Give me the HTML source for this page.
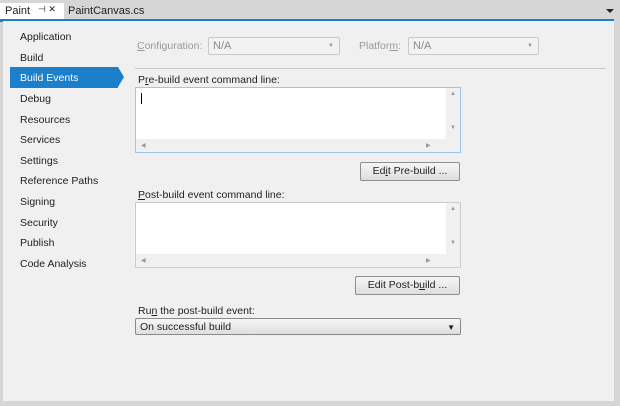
<!DOCTYPE html>
<html><head><style>
*{margin:0;padding:0;box-sizing:border-box}
body{width:620px;height:406px;background:#d6d6d6;font-family:"Liberation Sans",sans-serif;font-size:11px;color:#1e1e1e;position:relative;overflow:hidden}
.a{position:absolute}
.main{left:3px;top:21px;width:611px;height:380px;background:#f0f0f0}
.nav{left:20px;font-size:10.5px;color:#1e1e1e}
.lbl{font-size:10.5px;white-space:nowrap}
.combo{background:#f2f2f2;border:1px solid #c8c8c8;border-radius:2px;color:#8a8a8a;font-size:11px;padding:2px 4px}
.tb{background:#fff;border:1px solid #9ec6e8}
.btn{border:1px solid #8e8e8e;border-radius:2px;background:linear-gradient(#f6f6f6,#dedede);text-align:center;font-size:10.5px;line-height:17px}
.sv{background:#f0f0f0}
.ar{font-size:6px;color:#999}
</style></head><body>
<div class="a" style="left:0;top:3px;width:64px;height:17px;background:#fff"></div>
<div class="a lbl" style="left:5px;top:5px;font-size:11px">Paint</div>
<div class="a" style="left:38px;top:4px;font-size:9px">⊣ ✕</div>
<div class="a lbl" style="left:68px;top:5px;font-size:11px">PaintCanvas.cs</div>
<div class="a" style="left:606px;top:9px;width:0;height:0;border:4px solid transparent;border-top:4px solid #222;border-bottom:0"></div>
<div class="a" style="left:0;top:19px;width:614px;height:3px;background:#1c7fcc"></div>
<div class="a main"></div>
<div class="a" style="left:10px;top:67px;width:108px;height:21px;background:#1c7fcc"></div>
<div class="a" style="left:118px;top:67px;border-left:6px solid #1c7fcc;border-top:10.5px solid transparent;border-bottom:10.5px solid transparent"></div>
<div class="a nav" style="top:31px">Application</div>
<div class="a nav" style="top:52px">Build</div>
<div class="a nav" style="top:72px;color:#fff">Build Events</div>
<div class="a nav" style="top:93px">Debug</div>
<div class="a nav" style="top:114px">Resources</div>
<div class="a nav" style="top:134px">Services</div>
<div class="a nav" style="top:155px">Settings</div>
<div class="a nav" style="top:175px">Reference Paths</div>
<div class="a nav" style="top:196px">Signing</div>
<div class="a nav" style="top:217px">Security</div>
<div class="a nav" style="top:237px">Publish</div>
<div class="a nav" style="top:258px">Code Analysis</div>

<div class="a lbl" style="left:137px;top:40px;color:#9a9a9a"><u>C</u>onfiguration:</div>
<div class="a combo" style="left:208px;top:37px;width:132px;height:18px">N/A<span class="a ar" style="right:5px;top:5px">▼</span></div>
<div class="a lbl" style="left:359px;top:40px;color:#9a9a9a">Platfor<u>m</u>:</div>
<div class="a combo" style="left:408px;top:37px;width:131px;height:18px">N/A<span class="a ar" style="right:5px;top:5px">▼</span></div>
<div class="a" style="left:135px;top:68px;width:471px;height:1px;background:#c8c8c8"></div>

<div class="a lbl" style="left:138px;top:74px">P<u>r</u>e-build event command line:</div>
<div class="a tb" style="left:135px;top:87px;width:326px;height:66px">
<div class="a" style="left:5px;top:5px;width:1px;height:11px;background:#000"></div>
<div class="a sv" style="right:0;top:0;width:14px;height:64px"></div>
<div class="a sv" style="left:0;bottom:0;width:310px;height:13px"></div>
<span class="a ar" style="right:4px;top:3px">▲</span><span class="a ar" style="right:4px;top:37px">▼</span>
<span class="a ar" style="left:5px;bottom:3px">◀</span><span class="a ar" style="left:290px;bottom:3px">▶</span>
</div>
<div class="a btn" style="left:360px;top:162px;width:100px;height:19px">Ed<u>i</u>t Pre-build ...</div>

<div class="a lbl" style="left:138px;top:189px"><u>P</u>ost-build event command line:</div>
<div class="a tb" style="left:135px;top:202px;width:326px;height:66px;border-color:#ccc">
<div class="a sv" style="right:0;top:0;width:14px;height:64px"></div>
<div class="a sv" style="left:0;bottom:0;width:310px;height:13px"></div>
<span class="a ar" style="right:4px;top:3px">▲</span><span class="a ar" style="right:4px;top:37px">▼</span>
<span class="a ar" style="left:5px;bottom:3px">◀</span><span class="a ar" style="left:290px;bottom:3px">▶</span>
</div>
<div class="a btn" style="left:355px;top:276px;width:105px;height:19px">Edit Post-b<u>u</u>ild ...</div>

<div class="a lbl" style="left:138px;top:305px">Ru<u>n</u> the post-build event:</div>
<div class="a btn" style="left:135px;top:318px;width:326px;height:17px;text-align:left;padding-left:4px;line-height:16px;border-color:#8a8a8a">On successful build<span class="a" style="right:5px;top:1px;font-size:8px">▼</span></div>
</body></html>
